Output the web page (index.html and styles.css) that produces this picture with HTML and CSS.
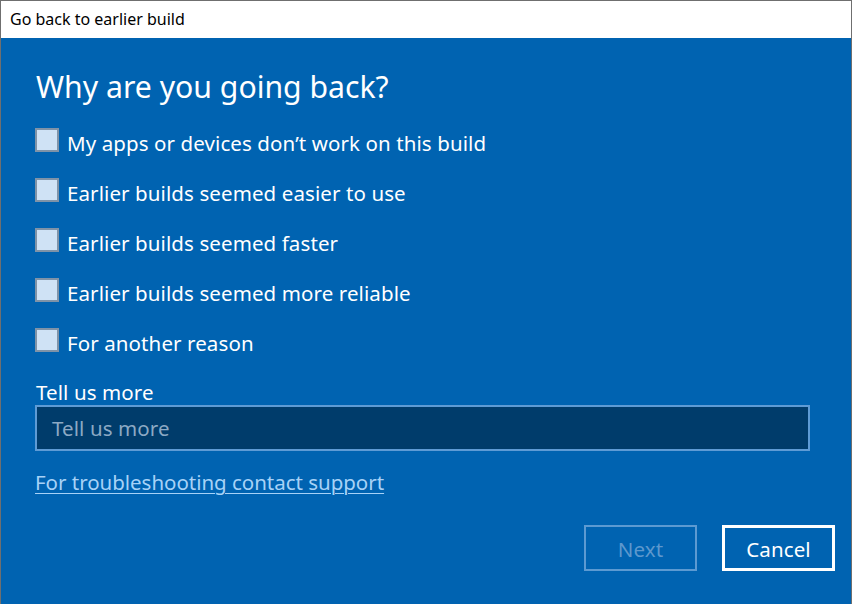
FILE: index.html
```html
<!DOCTYPE html>
<html lang="en">
<head>
<meta charset="utf-8">
<title>Go back to earlier build</title>
<link rel="stylesheet" href="styles.css">
</head>
<body>
<div class="window">
  <div class="titlebar">Go back to earlier build</div>
  <div class="content">
    <h1 class="heading">Why are you going back?</h1>
    <ul class="options">
      <li class="option"><span class="box"></span><span class="label">My apps or devices don’t work on this build</span></li>
      <li class="option"><span class="box"></span><span class="label">Earlier builds seemed easier to use</span></li>
      <li class="option"><span class="box"></span><span class="label">Earlier builds seemed faster</span></li>
      <li class="option"><span class="box"></span><span class="label">Earlier builds seemed more reliable</span></li>
      <li class="option"><span class="box"></span><span class="label">For another reason</span></li>
    </ul>
    <div class="field-label">Tell us more</div>
    <div class="input">Tell us more</div>
    <a class="link" href="#">For troubleshooting contact support</a>
    <div class="buttons">
      <div class="btn btn-disabled">Next</div>
      <div class="btn btn-primary">Cancel</div>
    </div>
  </div>
</div>
</body>
</html>
```
FILE: styles.css
```css
html, body {
  margin: 0;
  padding: 0;
  width: 852px;
  height: 604px;
  overflow: hidden;
}
body {
  font-family: "Noto Sans", "Open Sans", sans-serif;
}
.window {
  box-sizing: border-box;
  width: 852px;
  height: 604px;
  border: 1px solid #6f6f6f;
  border-bottom: none;
  display: flex;
  flex-direction: column;
}
.titlebar {
  height: 37px;
  flex: none;
  background: #ffffff;
  color: #000000;
  font-size: 16px;
  line-height: 37px;
  padding-left: 9px;
}
.content {
  flex: 1;
  background: #0063b1;
  color: #ffffff;
  padding: 0 0 0 35px;
  display: flex;
  flex-direction: column;
}
.heading {
  margin: 29px 0 0 0;
  font-size: 30.2px;
  font-weight: 400;
  line-height: 40px;
  letter-spacing: 0;
}
.options {
  list-style: none;
  margin: 11px 0 0 0;
  padding: 0;
}
.option {
  display: flex;
  align-items: center;
  height: 50px;
}
.box {
  box-sizing: border-box;
  width: 24px;
  height: 24px;
  border: 2px solid #7f93a8;
  background: #cfe2f5;
  flex: none;
  margin-left: -1px;
  margin-bottom: 7px;
}
.label {
  margin-left: 8px;
  font-size: 20.5px;
  line-height: 28px;
  letter-spacing: 0.1px;
}
.field-label {
  margin-top: 12px;
  font-size: 20.5px;
  line-height: 24px;
  letter-spacing: 0.1px;
}
.input {
  box-sizing: border-box;
  margin-top: 1px;
  margin-left: -1px;
  width: 775px;
  height: 46px;
  border: 2px solid #5e9bd5;
  background: #003c6b;
  color: #8ca9c4;
  font-size: 20.5px;
  line-height: 42px;
  padding-left: 15px;
  letter-spacing: 0.1px;
}
.link {
  margin-top: 17px;
  margin-left: -1px;
  align-self: flex-start;
  color: #a7d2f7;
  font-size: 20.5px;
  line-height: 28px;
  letter-spacing: -0.02px;
  text-decoration: underline;
  text-underline-offset: 3px;
  text-decoration-thickness: 1px;
}
.buttons {
  display: flex;
  justify-content: flex-end;
  gap: 25px;
  margin-top: 29px;
  padding-right: 16px;
}
.btn {
  box-sizing: border-box;
  width: 113px;
  height: 46px;
  display: flex;
  align-items: center;
  justify-content: center;
  font-size: 20.5px;
  letter-spacing: 0.1px;
  padding-top: 2px;
}
.btn-disabled {
  border: 2px solid #5c9ad2;
  color: #5d98cd;
}
.btn-primary {
  border: 3px solid #ffffff;
  color: #ffffff;
}
```
